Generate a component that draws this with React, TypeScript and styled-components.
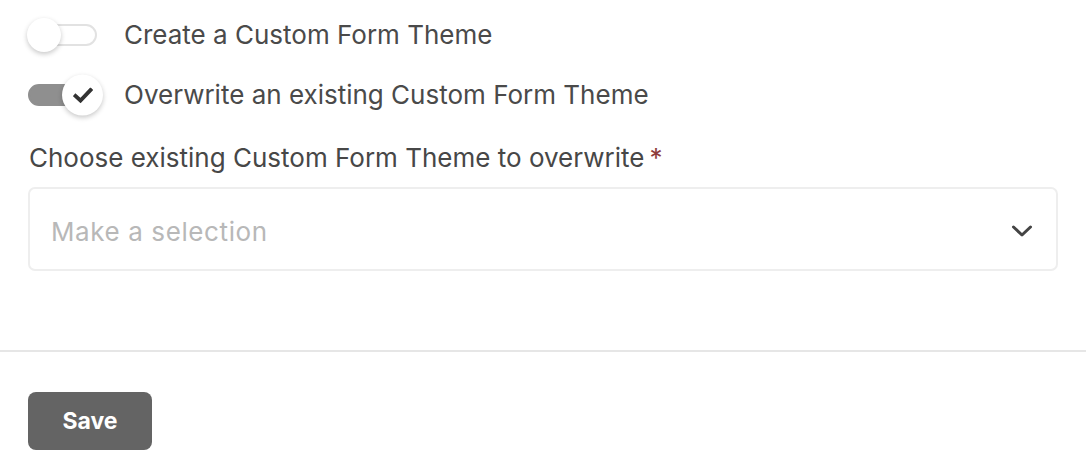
import React from 'react';
import styled, {createGlobalStyle} from "styled-components";

const GlobalStyle = createGlobalStyle`
    body {
        margin: 0;
        background: #ffffff;
        font-family: "Inter", "Noto Sans", sans-serif;
        color: #4a4a4a;
    }
`

const Toggle = ({checked}: {checked: boolean}) => (
    <Track $checked={checked}>
        <Knob $checked={checked}>
            {checked && (
                <svg width="20" height="16" viewBox="0 0 20 16">
                    <path d="M2.5 8.5 L7.5 13 L17.5 2.5" fill="none" stroke="#333333" strokeWidth="3.8"
                          strokeLinecap="square"/>
                </svg>
            )}
        </Knob>
    </Track>
);

export default function App() {
    return (
        <>
            <GlobalStyle/>
            <Page>
                <Form>
                    <ToggleRow>
                        <Toggle checked={false}/>
                        <ToggleLabel>Create a Custom Form Theme</ToggleLabel>
                    </ToggleRow>
                    <ToggleRow>
                        <Toggle checked={true}/>
                        <ToggleLabel>Overwrite an existing Custom Form Theme</ToggleLabel>
                    </ToggleRow>
                    <Field>
                        <FieldLabel>
                            Choose existing Custom Form Theme to overwrite<Required>*</Required>
                        </FieldLabel>
                        <Select>
                            <Placeholder>Make a selection</Placeholder>
                            <svg width="22" height="14" viewBox="0 0 22 14">
                                <path d="M2.5 3 L11 11 L19.5 3" fill="none" stroke="#444444" strokeWidth="3"
                                      strokeLinecap="round" strokeLinejoin="round"/>
                            </svg>
                        </Select>
                    </Field>
                </Form>
                <Divider/>
                <Footer>
                    <SaveButton>Save</SaveButton>
                </Footer>
            </Page>
        </>
    );
}

const Page = styled.div`
    width: 1086px;
    height: 476px;
    overflow: hidden;
`

const Form = styled.div`
    padding: 18px 28px 0 28px;
    display: flex;
    flex-direction: column;
    height: 333px;
    box-sizing: border-box;
`

const ToggleRow = styled.div`
    display: flex;
    align-items: center;
    height: 34px;
    margin-bottom: 26px;
`

const Track = styled.div<{ $checked: boolean }>`
    position: relative;
    width: 69px;
    height: 22px;
    box-sizing: border-box;
    border-radius: 11px;
    border: 2px solid ${p => p.$checked ? "#8f8f8f" : "#e2e2e2"};
    background: ${p => p.$checked ? "#8f8f8f" : "#ffffff"};
    flex-shrink: 0;
`

const Knob = styled.div<{ $checked: boolean }>`
    position: absolute;
    top: 50%;
    left: ${p => p.$checked ? "32px" : "-3px"};
    width: ${p => p.$checked ? "41px" : "34px"};
    height: ${p => p.$checked ? "41px" : "34px"};
    transform: translateY(-50%);
    border-radius: 50%;
    background: #ffffff;
    box-shadow: 0 2px 5px rgba(0, 0, 0, 0.22);
    display: flex;
    align-items: center;
    justify-content: center;
`

const ToggleLabel = styled.span`
    margin-left: 27px;
    font-size: 26px;
    line-height: 32px;
    color: #4a4a4a;
`

const Field = styled.div`
    display: flex;
    flex-direction: column;
    margin-top: 4px;
`

const FieldLabel = styled.label`
    font-size: 26px;
    line-height: 32px;
    color: #474747;
    padding-left: 1px;
    margin-bottom: 13px;
`

const Required = styled.span`
    color: #8e3b3b;
    margin-left: 5px;
`

const Select = styled.div`
    height: 84px;
    box-sizing: border-box;
    border: 2px solid #eeeeee;
    border-radius: 7px;
    display: flex;
    align-items: center;
    justify-content: space-between;
    padding: 4px 23px 0 21px;
`

const Placeholder = styled.span`
    font-size: 26px;
    letter-spacing: 0.6px;
    color: #b8b8b8;
`

const Divider = styled.div`
    height: 2px;
    background: #e6e6e6;
    margin-top: 17px;
`

const Footer = styled.div`
    padding: 40px 28px;
`

const SaveButton = styled.button`
    width: 124px;
    height: 58px;
    border: none;
    border-radius: 8px;
    background: #646464;
    color: #ffffff;
    font-family: "Inter", "Noto Sans", sans-serif;
    font-size: 23px;
    font-weight: 700;
    cursor: pointer;
`
